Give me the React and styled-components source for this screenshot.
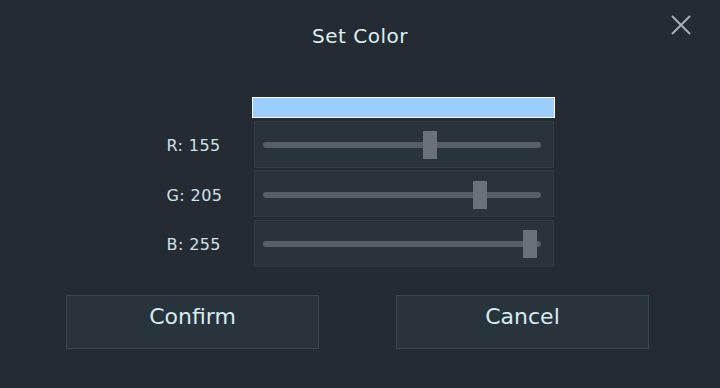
import React from "react";
import styled, { createGlobalStyle } from "styled-components";

const GlobalStyle = createGlobalStyle`
  html, body {
    margin: 0;
    padding: 0;
    background: #252b33;
  }
  body {
    font-family: "DejaVu Sans", "Liberation Sans", sans-serif;
    color: #d6ebf2;
  }
`;

const channels = [
  { key: "R", value: 155 },
  { key: "G", value: 205 },
  { key: "B", value: 255 },
];

const App = () => {
  const rgb = channels.map((c) => c.value).join(", ");
  return (
    <>
      <GlobalStyle />
      <Dialog>
        <Header>
          <span />
          <Title>Set Color</Title>
          <CloseButton aria-label="Close">
            <svg width="22" height="22" viewBox="0 0 22 22">
              <path
                d="M2 2 L20 20 M20 2 L2 20"
                stroke="#a4b1bb"
                strokeWidth="2"
                fill="none"
              />
            </svg>
          </CloseButton>
        </Header>

        <Editor>
          <span />
          <Swatch style={{ backgroundColor: `rgb(${rgb})` }} />
          {channels.map((c) => (
            <React.Fragment key={c.key}>
              <Label>
                {c.key}: {c.value}
              </Label>
              <SliderBox>
                <Track>
                  <Thumb style={{ left: `${5.5 + c.value}px` }} />
                </Track>
              </SliderBox>
            </React.Fragment>
          ))}
        </Editor>

        <Footer>
          <Button>Confirm</Button>
          <Button>Cancel</Button>
        </Footer>
      </Dialog>
    </>
  );
};

export default App;

const Dialog = styled.div`
  width: 720px;
  height: 388px;
  display: flex;
  flex-direction: column;
  background: #252b33;
`;

const Header = styled.div`
  display: grid;
  grid-template-columns: 1fr auto 1fr;
  padding: 14px 28px 0;
`;

const Title = styled.div`
  margin-top: 9.5px;
  font-size: 20px;
  line-height: 24px;
  letter-spacing: 0.5px;
  color: #dceff5;
`;

const CloseButton = styled.div`
  justify-self: end;
  width: 22px;
  height: 22px;
  cursor: pointer;
  svg {
    display: block;
  }
`;

const Editor = styled.div`
  margin: 49.5px auto 0;
  display: grid;
  grid-template-columns: 87px 300px;
  grid-template-rows: 21px repeat(3, 47px);
  row-gap: 2.5px;
`;

const Swatch = styled.div`
  box-sizing: border-box;
  margin-left: -2px;
  width: 303px;
  height: 21px;
  border: 1px solid #ffffff;
`;

const Label = styled.div`
  display: flex;
  align-items: center;
  padding-top: 3px;
  font-size: 16px;
  letter-spacing: 0.4px;
  color: #cde2ea;
  white-space: nowrap;
`;

const SliderBox = styled.div`
  box-sizing: border-box;
  display: flex;
  align-items: center;
  padding: 2px 0 0 8px;
  background: #29333c;
  border: 1px solid #2f3a43;
`;

const Track = styled.div`
  position: relative;
  width: 278px;
  height: 6px;
  border-radius: 3px;
  background: #575e69;
`;

const Thumb = styled.div`
  position: absolute;
  top: -11px;
  width: 14px;
  height: 28px;
  background: #6a717b;
`;

const Footer = styled.div`
  margin-top: 28px;
  display: flex;
  justify-content: space-between;
  padding: 0 71px 0 66px;
`;

const Button = styled.button`
  box-sizing: border-box;
  width: 253px;
  height: 54px;
  padding: 0 0 10px;
  background: #28333c;
  border: 1px solid #3a4650;
  color: #d6ebf2;
  font-family: "DejaVu Sans", "Liberation Sans", sans-serif;
  font-size: 22px;
  cursor: pointer;
`;
